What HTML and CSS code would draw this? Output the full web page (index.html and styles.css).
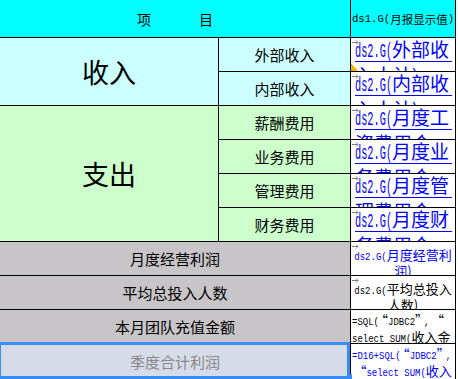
FILE: index.html
```html
<!DOCTYPE html>
<html lang="zh-CN">
<head>
<meta charset="utf-8">
<title>报表</title>
<link rel="stylesheet" href="styles.css">
</head>
<body>
<div class="sheet">
  <div class="c hd hd-item"><span>项</span><span>目</span></div>
  <div class="c hd hd-val"><span class="lt">ds1.G(</span>月报显示值<span class="lt">)</span></div>

  <div class="c big inc r2">收入</div>
  <div class="c sub inc">外部收入</div>
  <div class="c val">
    <svg class="flag" width="7" height="5" viewBox="0 0 7 5"><path d="M0 2.5H6M4 0.5L6 2.5L4 4.5" stroke="#808080" fill="none" stroke-width="1"/></svg>
    <svg class="tri" width="7" height="8" viewBox="0 0 7 8"><polygon points="0,0 0,8 7,8" fill="#f0b400"/></svg>
    <div class="lnk"><span class="la">ds2.G(</span>外部收入小计)</div>
  </div>
  <div class="c sub inc">内部收入</div>
  <div class="c val">
    <svg class="flag" width="7" height="5" viewBox="0 0 7 5"><path d="M0 2.5H6M4 0.5L6 2.5L4 4.5" stroke="#808080" fill="none" stroke-width="1"/></svg>
    <div class="lnk"><span class="la">ds2.G(</span>内部收入小计)</div>
  </div>

  <div class="c big exp r4">支出</div>
  <div class="c sub exp">薪酬费用</div>
  <div class="c val">
    <svg class="flag" width="7" height="5" viewBox="0 0 7 5"><path d="M0 2.5H6M4 0.5L6 2.5L4 4.5" stroke="#808080" fill="none" stroke-width="1"/></svg>
    <div class="lnk"><span class="la">ds2.G(</span>月度工资费用合计)</div>
  </div>
  <div class="c sub exp">业务费用</div>
  <div class="c val">
    <svg class="flag" width="7" height="5" viewBox="0 0 7 5"><path d="M0 2.5H6M4 0.5L6 2.5L4 4.5" stroke="#808080" fill="none" stroke-width="1"/></svg>
    <div class="lnk"><span class="la">ds2.G(</span>月度业务费用合计)</div>
  </div>
  <div class="c sub exp">管理费用</div>
  <div class="c val">
    <svg class="flag" width="7" height="5" viewBox="0 0 7 5"><path d="M0 2.5H6M4 0.5L6 2.5L4 4.5" stroke="#808080" fill="none" stroke-width="1"/></svg>
    <div class="lnk"><span class="la">ds2.G(</span>月度管理费用合计)</div>
  </div>
  <div class="c sub exp">财务费用</div>
  <div class="c val">
    <svg class="flag" width="7" height="5" viewBox="0 0 7 5"><path d="M0 2.5H6M4 0.5L6 2.5L4 4.5" stroke="#808080" fill="none" stroke-width="1"/></svg>
    <div class="lnk"><span class="la">ds2.G(</span>月度财务费用合计)</div>
  </div>

  <div class="c tot">月度经营利润</div>
  <div class="c val">
    <svg class="flag" width="7" height="5" viewBox="0 0 7 5"><path d="M0 2.5H6M4 0.5L6 2.5L4 4.5" stroke="#808080" fill="none" stroke-width="1"/></svg>
    <div class="mid blue"><span class="l9">ds2.G(</span>月度经营利润)</div>
  </div>
  <div class="c tot">平均总投入人数</div>
  <div class="c val">
    <svg class="flag" width="7" height="5" viewBox="0 0 7 5"><path d="M0 2.5H6M4 0.5L6 2.5L4 4.5" stroke="#808080" fill="none" stroke-width="1"/></svg>
    <div class="mid"><span class="l9">ds2.G(</span>平均总投入人数)</div>
  </div>
  <div class="c tot">本月团队充值金额</div>
  <div class="c val">
    <div class="sql"><span class="l9">=SQL(</span><span class="ql">“</span><span class="l9">JDBC2</span><span class="qr">”</span><span class="l9">, </span><span class="ql">“</span><br><span class="l9">select SUM(</span>收入金<br>额<span class="l9">) from 收入</span></div>
  </div>
  <div class="c tot cur">季度合计利润</div>
  <div class="c val">
    <div class="sql blue"><span class="l9">=D16+SQL(</span><span class="ql">“</span><span class="l9">JDBC2</span><span class="qr">”</span><span class="l9">,</span><br><span class="l9"> </span><span class="ql">“</span><span class="l9">select SUM(</span>收入<br>金额<span class="l9">) from</span></div>
  </div>

  <div class="sel"></div>
  <div class="handle"></div>
</div>
</body>
</html>
```

FILE: styles.css
```css
* { box-sizing: border-box; }
html, body { margin: 0; padding: 0; background: #fff; }
body {
  width: 458px;
  height: 379px;
  overflow: hidden;
  font-family: "Noto Sans CJK SC", sans-serif;
  color: #000;
}
.sheet {
  position: relative;
  display: grid;
  grid-template-columns: 218px 131px 104px;
  grid-template-rows: 37px repeat(9, 33px) 40px;
  gap: 1px;
  width: 456px;
  padding-right: 1px;
  background: #000;
}
.c { position: relative; overflow: hidden; }
.hd {
  background: #00ffff;
  display: flex;
  align-items: center;
  justify-content: center;
}
.hd-item { grid-column: span 2; font-size: 14px; gap: 48px; }
.hd-val { font-size: 11.5px; white-space: nowrap; }
.lt { font-family: "Liberation Mono", monospace; font-size: 10.6px; }
.inc { background: #ccffff; }
.exp { background: #ccffcc; }
.r2 { grid-row: span 2; }
.r4 { grid-row: span 4; }
.big {
  font-size: 27px;
  display: flex;
  align-items: center;
  justify-content: center;
}
.sub {
  font-size: 15px;
  display: flex;
  align-items: center;
  justify-content: center;
}
.tot {
  grid-column: span 2;
  background: #c8c5c8;
  font-size: 15px;
  display: flex;
  align-items: center;
  justify-content: center;
}
.tot.cur { background: #d6dbe8; color: #888; align-items: flex-start; padding-top: 7px; }
.val { background: #fff; }
.flag { position: absolute; left: 1px; top: 2px; }
.tri { position: absolute; left: 0; bottom: 0; }
.lnk {
  color: #0000ff;
  font-size: 19px;
  line-height: 25px;
  margin: -2px 3px 0 0;
  padding-left: 4px;
  background-image: repeating-linear-gradient(to bottom, #0000ff 0 1px, transparent 1px 25px);
  background-clip: content-box;
}
.la {
  display: inline-block;
  font-family: "Liberation Mono", monospace;
  font-size: 21px;
  line-height: 1;
  transform: scaleX(0.49);
  transform-origin: 0 0;
  margin-right: -38.6px;
}
.mid {
  font-size: 13px;
  line-height: 16px;
  text-align: center;
  padding: 5px 1px 0;
}
.blue { color: #0000ff; }
.l9 {
  display: inline-block;
  font-family: "Liberation Mono", monospace;
  font-size: 9px;
  line-height: 1;
  white-space: pre;
  transform: scaleY(1.3);
  transform-origin: 0 78%;
}
.ql { margin-left: -4px; }
.qr { margin-right: -4px; }
.sql {
  font-size: 13px;
  line-height: 17px;
  white-space: nowrap;
  padding: 1px 0 0 1px;
}
.sel {
  position: absolute;
  left: -2px;
  top: 342px;
  width: 352px;
  height: 37px;
  border: 3px solid #3a8cf5;
}
.handle {
  position: absolute;
  left: 347px;
  top: 374px;
  width: 5px;
  height: 5px;
  background: #3a8cf5;
}
```
